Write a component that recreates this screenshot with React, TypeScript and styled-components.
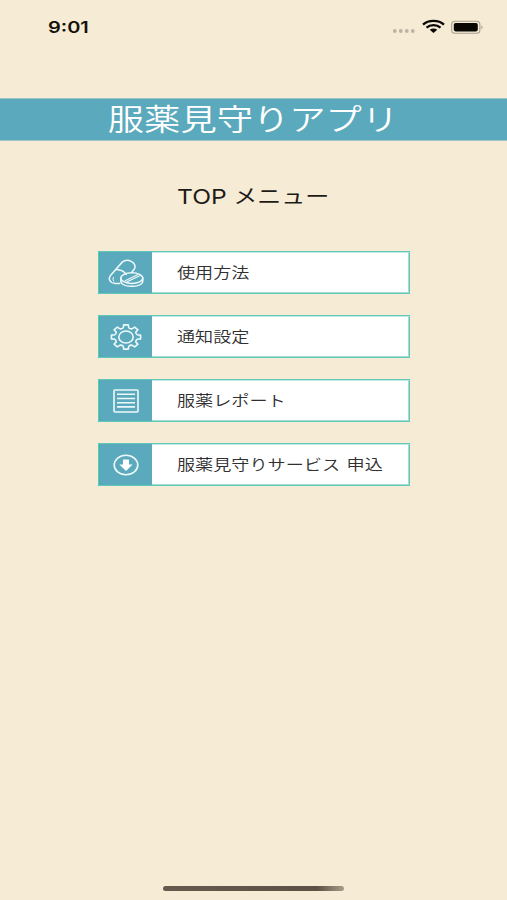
import React from "react";
import styled, { createGlobalStyle } from "styled-components";

const GlobalStyle = createGlobalStyle`
  * { box-sizing: border-box; }
  body { margin: 0; background: #f6ebd5; }
`;

const Screen = styled.div`
  width: 507px;
  height: 900px;
  display: flex;
  flex-direction: column;
  align-items: center;
  overflow: hidden;
  background: #f6ebd5;
  color: #1d1b18;
  font-family: "Noto Sans CJK JP", sans-serif;
`;

const StatusBar = styled.header`
  width: 100%;
  height: 98px;
  flex: none;
  display: flex;
  justify-content: space-between;
  align-items: flex-start;
  padding: 17px 24px 0 48px;
`;

const Wide = styled.span<{ $stretch: number; $origin?: string }>`
  display: inline-block;
  white-space: pre;
  transform: scaleX(${(p) => p.$stretch});
  transform-origin: ${(p) => p.$origin ?? "left"} center;
`;

const Clock = styled.time`
  font: 600 16px/21px Inter, sans-serif;
  color: #15120c;
`;

const StatusIcons = styled.div`
  display: flex;
  align-items: center;
  height: 20px;
`;

const Banner = styled.h1`
  width: 100%;
  height: 43px;
  flex: none;
  margin: 0;
  display: flex;
  justify-content: center;
  align-items: center;
  padding: 0 1px 5px 0;
  background: #5ba9bc;
  border: solid #9cc5c6;
  border-width: 1px 0;
  color: #fff;
  font-size: 30px;
  line-height: 36px;
  font-weight: 350;
`;

const MenuTitle = styled.h2`
  width: 153px;
  height: 30px;
  margin: 40px 0;
  font-size: 20px;
  line-height: 30px;
  font-weight: 400;
  word-spacing: 1px;
`;

const Latin = styled.span`
  font-family: Inter, sans-serif;
  font-size: 20.5px;
`;

const Menu = styled.nav`
  width: 312px;
  display: flex;
  flex-direction: column;
  gap: 21px;
`;

const MenuButton = styled.button`
  height: 43px;
  display: flex;
  padding: 0;
  border: solid #5fc8b8;
  border-width: 1px 1.5px 1px 1px;
  box-shadow: inset 0 1px #c5eae5, inset 0 -1px #a4dcd4, inset -1px 0 #a4dcd4;
  background: #fff;
  color: #303030;
  font: 350 15px/39px "Noto Sans CJK JP", sans-serif;
  word-spacing: 2px;
  text-align: left;
`;

const IconCell = styled.span`
  width: 53px;
  height: 41px;
  flex: none;
  display: flex;
  align-items: center;
  justify-content: center;
  margin-right: 25px;
  background: #5ba9bc;
  border-left: 1px solid #43b3a9;
`;

const HomeBar = styled.div`
  width: 181px;
  height: 5px;
  margin: auto 0 9px;
  border-radius: 3px;
  background: linear-gradient(90deg, #645a4d, #5b5144 85%, #a79d89);
`;

const StatusGlyphs = () => (
  <svg width="92" height="18" viewBox="0 0 92 18">
    <g fill="#bcb4a3">
      <circle cx="3.8" cy="13" r="1.9" />
      <circle cx="9.8" cy="13" r="1.9" />
      <circle cx="15.8" cy="13" r="1.9" />
      <circle cx="21.8" cy="13" r="1.9" />
    </g>
    <g fill="none" stroke="#080704" strokeWidth="2.3">
      <path d="M32 6.6C37.5 1.6 47.5 1.6 53 6.6" />
      <path d="M35.5 9.6C39.3 6.2 45.7 6.2 49.5 9.6" />
    </g>
    <path d="M38.7 11.8Q42.5 9 46.3 11.8L42.5 15Z" fill="#080704" />
    <rect x="60.7" y="3.2" width="28.2" height="12" rx="3.3" fill="none" stroke="#a8a08f" strokeWidth="1.1" />
    <rect x="62.8" y="5" width="24" height="8.4" rx="1.8" fill="#080704" />
    <path d="M90.4 7.2Q92.7 9.2 90.4 11.2Z" fill="#a8a08f" />
  </svg>
);

const PillsIcon = () => (
  <svg width="36" height="30" viewBox="0 0 36 30" fill="none" stroke="#eef9fc" strokeWidth="1.5" strokeLinecap="round">
    <path d="M11.8 25.6H7.2C2.4 25.2 -.3 21.2 2.5 17.6L14 4.4C19.5-.5 30 4.8 26.2 11.3L23.8 14.2" />
    <path d="M8.3 11.4Q15.5 11.7 18.3 16.4" />
    <path d="M5.3 19.3Q4.2 21 5.7 23.1" strokeWidth="1" />
    <ellipse cx="23.8" cy="20.1" rx="11" ry="5.3" />
    <path d="M12.8 20.3V23.3C14 30 33.6 30 34.8 23.3V20.3" />
    <path d="M17.2 22.8L29.5 16.7M19.2 23.8L31.7 17.7" strokeWidth="1.1" />
  </svg>
);

const TEETH = 8;
const gearPath =
  Array.from({ length: TEETH }, (_, i) => {
    const at = (r: number, offset: number) => {
      const a = ((i * 360) / TEETH + offset) * (Math.PI / 180);
      return `${(16 + r * 1.2 * Math.sin(a)).toFixed(2)} ${(14 - r * Math.cos(a)).toFixed(2)}`;
    };
    return `${i ? "L" : "M"}${at(9.5, -14)}L${at(12.3, -9)}L${at(12.3, 9)}L${at(9.5, 14)}Q${at(8.7, 22.5)} ${at(9.5, 31)}`;
  }).join("") + "Z";

const GearIcon = () => (
  <svg width="32" height="28" viewBox="0 0 32 28" fill="none" stroke="#eef9fc" strokeWidth="1.6" strokeLinejoin="round">
    <path d={gearPath} />
    <ellipse cx="16" cy="14" rx="7.2" ry="6" />
  </svg>
);

const ReportIcon = () => (
  <svg width="26" height="24" viewBox="0 0 26 24" fill="none" stroke="#eef9fc" strokeWidth="1.6">
    <rect x="1" y="1" width="24" height="22" rx="1" />
    <path d="M4 5.3H22M4 9.5H22M4 13.7H22M4 17.9H22" />
  </svg>
);

const DownloadIcon = () => (
  <svg width="26" height="22" viewBox="0 0 26 22">
    <ellipse cx="13" cy="11" rx="11.8" ry="9.8" fill="none" stroke="#eef9fc" strokeWidth="1.6" />
    <path d="M10 5.5H16V10.5H19.6L13 17L6.4 10.5H10Z" fill="#fff" />
  </svg>
);

const items = [
  { label: "使用方法", Icon: PillsIcon },
  { label: "通知設定", Icon: GearIcon },
  { label: "服薬レポート", Icon: ReportIcon },
  { label: "服薬見守りサービス 申込", Icon: DownloadIcon },
];

export default function App() {
  return (
    <>
      <GlobalStyle />
      <Screen>
        <StatusBar>
          <Clock><Wide $stretch={1.25}>9:01</Wide></Clock>
          <StatusIcons><StatusGlyphs /></StatusIcons>
        </StatusBar>
        <Banner><Wide $stretch={1.21} $origin="center">服薬見守りアプリ</Wide></Banner>
        <MenuTitle><Wide $stretch={1.2}><Latin>TOP</Latin> メニュー</Wide></MenuTitle>
        <Menu>
          {items.map(({ label, Icon }) => (
            <MenuButton key={label} type="button">
              <IconCell><Icon /></IconCell>
              <Wide $stretch={1.208}>{label}</Wide>
            </MenuButton>
          ))}
        </Menu>
        <HomeBar />
      </Screen>
    </>
  );
}
